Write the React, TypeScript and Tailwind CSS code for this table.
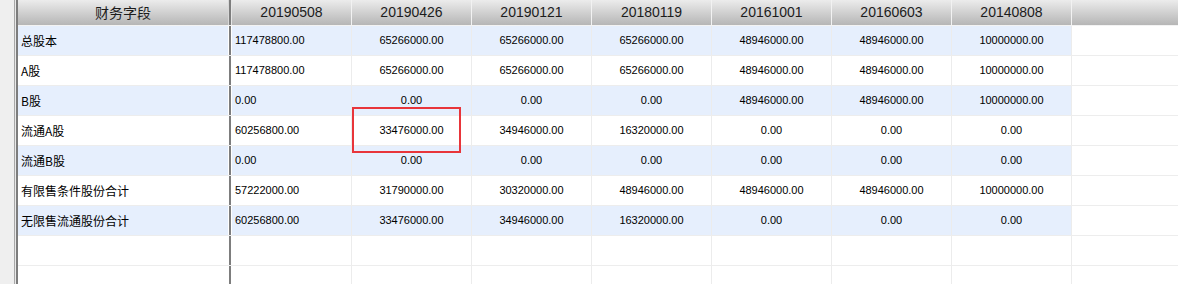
import React from "react";

const dates = ["20190508", "20190426", "20190121", "20180119", "20161001", "20160603", "20140808"];

const rows: { name: string; values: string[] }[] = [
  { name: "总股本", values: ["117478800.00", "65266000.00", "65266000.00", "65266000.00", "48946000.00", "48946000.00", "10000000.00"] },
  { name: "A股", values: ["117478800.00", "65266000.00", "65266000.00", "65266000.00", "48946000.00", "48946000.00", "10000000.00"] },
  { name: "B股", values: ["0.00", "0.00", "0.00", "0.00", "48946000.00", "48946000.00", "10000000.00"] },
  { name: "流通A股", values: ["60256800.00", "33476000.00", "34946000.00", "16320000.00", "0.00", "0.00", "0.00"] },
  { name: "流通B股", values: ["0.00", "0.00", "0.00", "0.00", "0.00", "0.00", "0.00"] },
  { name: "有限售条件股份合计", values: ["57222000.00", "31790000.00", "30320000.00", "48946000.00", "48946000.00", "48946000.00", "10000000.00"] },
  { name: "无限售流通股份合计", values: ["60256800.00", "33476000.00", "34946000.00", "16320000.00", "0.00", "0.00", "0.00"] },
];

export default function App() {
  return (
    <div className="flex h-[284px] w-[1178px] overflow-hidden bg-white font-['Liberation_Sans','Noto_Sans_CJK_SC',sans-serif] text-black">
      {/* left gutter */}
      <div className="w-[14px] bg-[#efefef]" />
      <div className="w-[1px] bg-[#a8a8a8]" />
      <div className="w-[1px] bg-[#e9e9e9]" />
      <div className="w-[2px] bg-[#7d7d7d]" />

      <div className="flex min-w-0 flex-1 flex-col">
        {/* header */}
        <div className="flex h-[26px] shrink-0 border-b border-[#f3f3f3] bg-gradient-to-b from-[#ececec] to-[#b6b6b6] text-[14px] text-[#1c1c1c]">
          <div className="flex w-[211px] items-center justify-center border-r border-[#d8d8d8] font-['Noto_Sans_CJK_SC',sans-serif] text-[14px]">
            财务字段
          </div>
          <div className="w-[2px] bg-[#7d7d7d]" />
          <div className="w-[1px] bg-[#e6e6e6]" />
          {dates.map((d) => (
            <div key={d} className="flex w-[120px] items-center justify-center border-r border-[#f2f2f2]">
              {d}
            </div>
          ))}
          <div className="flex-1" />
        </div>

        {/* body */}
        {[...rows, null, null].map((row, i) => {
          const blue = row !== null && i % 2 === 0;
          const bg = blue ? "bg-[#e6effd]" : "bg-white";
          return (
            <div key={i} className="flex h-[30px] shrink-0 border-b border-[#ededed] text-[11px]">
              <div className={`flex w-[211px] items-center border-r border-white pl-[3px] font-['Noto_Sans_CJK_SC',sans-serif] text-[12px] ${bg}`}>
                {row?.name}
              </div>
              <div className="w-[2px] bg-[#7d7d7d]" />
              <div className="w-[1px] bg-white" />
              {dates.map((d, j) => (
                <div
                  key={d}
                  className={`relative flex w-[120px] items-center border-r border-[#ececec] ${bg} ${j === 0 ? "justify-start pl-[3px]" : "justify-center"}`}
                >
                  {row?.values[j]}
                  {i === 3 && j === 1 && (
                    <div className="pointer-events-none absolute left-0 top-[-9px] z-10 h-[46px] w-[109px] border-2 border-[#e8353a]" />
                  )}
                </div>
              ))}
              <div className="flex-1 bg-white" />
            </div>
          );
        })}
      </div>
    </div>
  );
}
